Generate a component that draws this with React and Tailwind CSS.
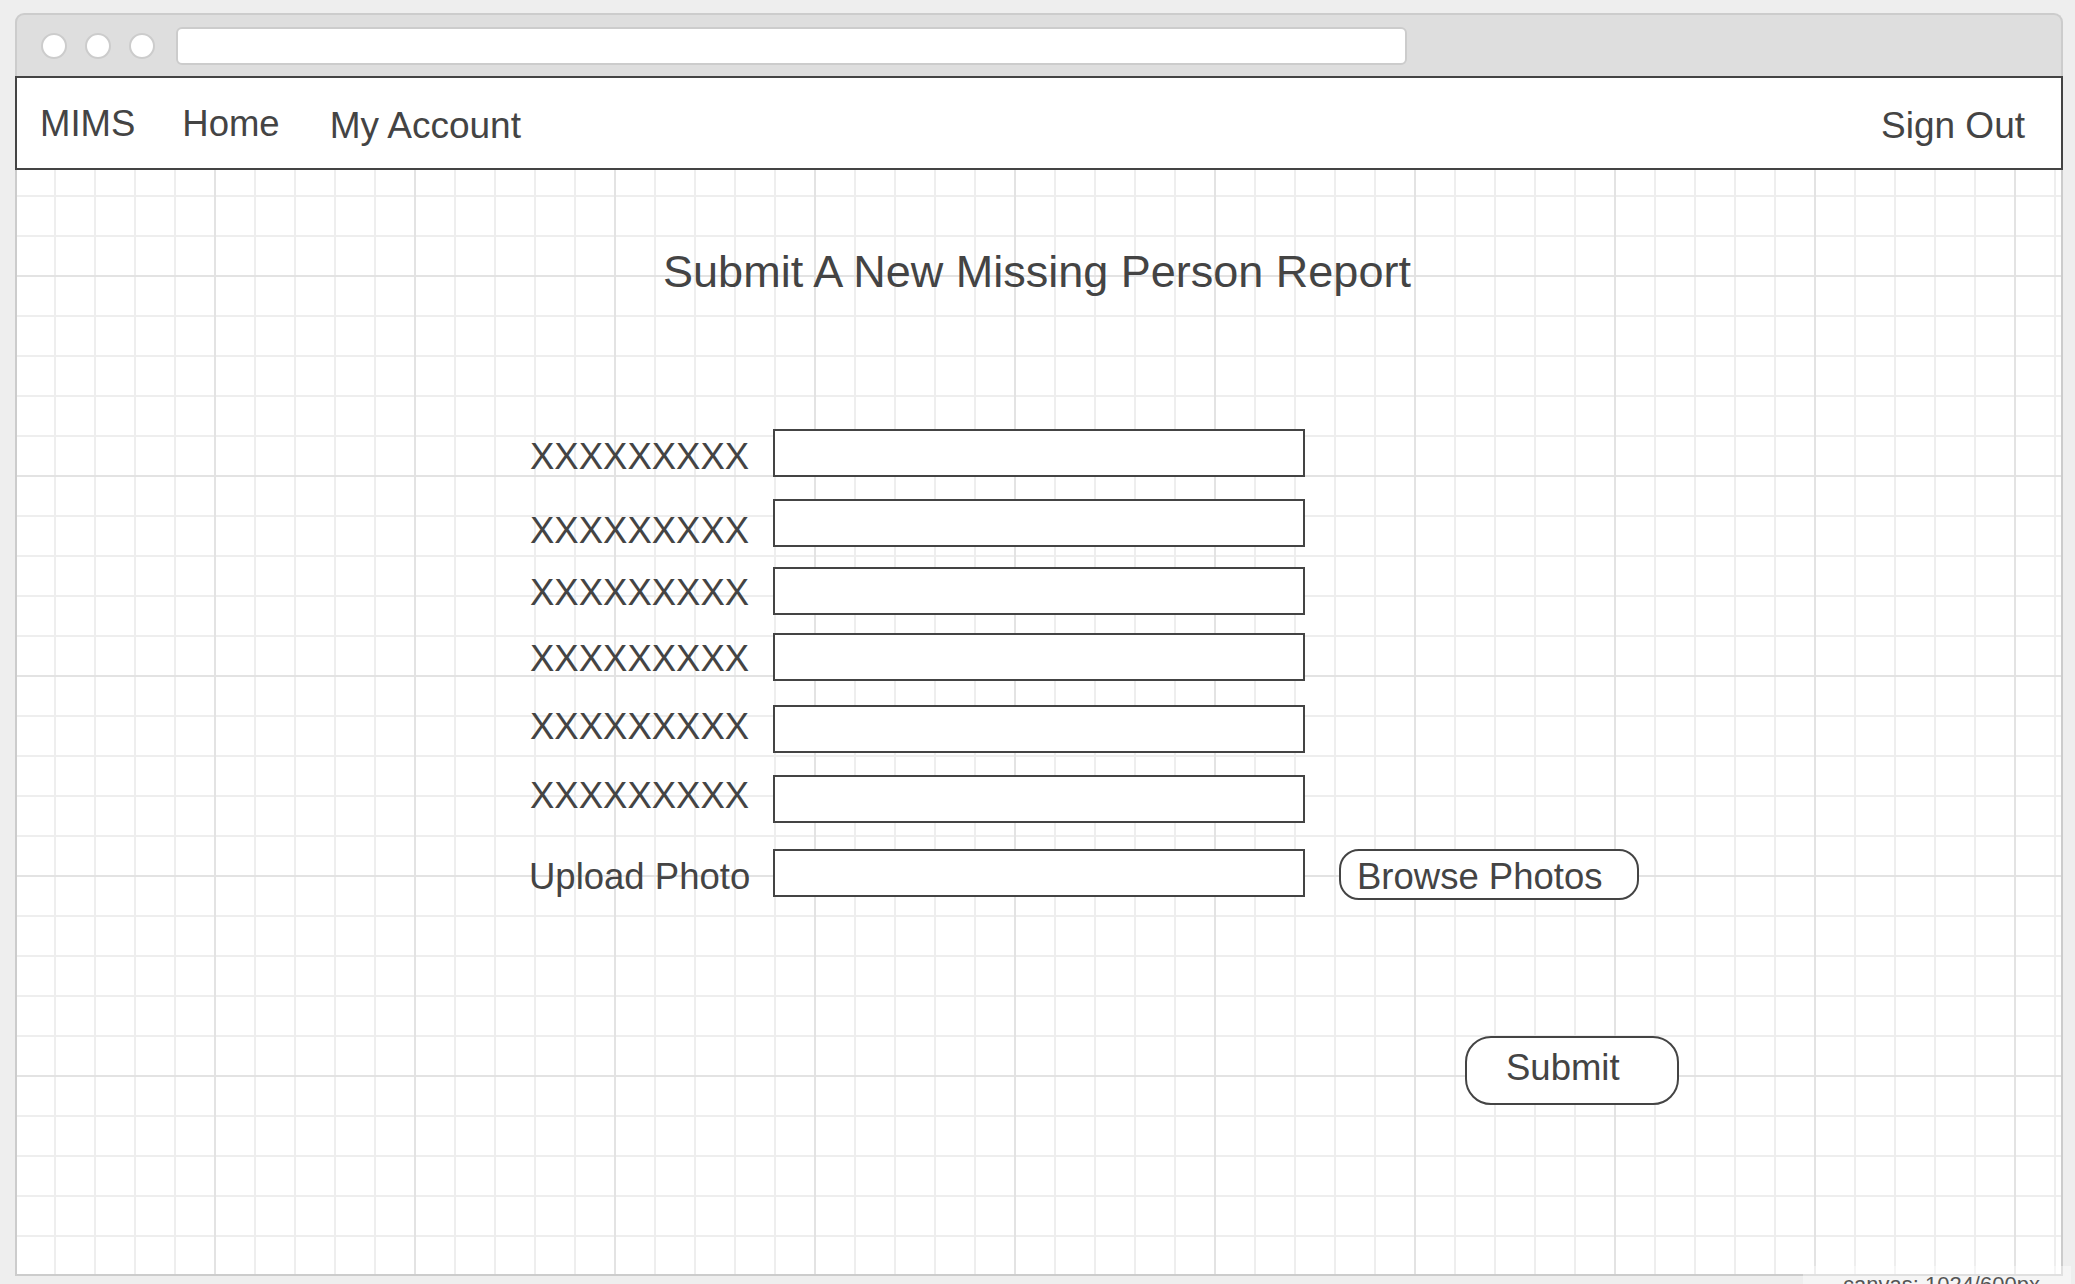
export default function App() {
  const font = "font-['Liberation_Sans',Arial,sans-serif]";
  return (
    <div className={`relative w-[2075px] h-[1284px] overflow-hidden bg-[#eeeeee] pt-[13px] pl-[15px] ${font} text-[#444444]`}>
      <div className="w-[2048px]">
        {/* Browser title bar */}
        <div className="h-[63px] bg-[#dedede] border-2 border-b-0 border-[#cccccc] rounded-t-[9px] flex items-center pl-[24px] gap-[18px]">
          <div className="w-[26px] h-[26px] rounded-full bg-white border-2 border-[#cccccc]" />
          <div className="w-[26px] h-[26px] rounded-full bg-white border-2 border-[#cccccc]" />
          <div className="w-[26px] h-[26px] rounded-full bg-white border-2 border-[#cccccc]" />
          <div className="ml-[3px] w-[1231px] h-[38px] bg-white border-2 border-[#cccccc] rounded-[6px]" />
        </div>

        {/* Nav */}
        <nav className="h-[94px] bg-white border-2 border-[#444444] flex items-start pl-[23px] pr-[36px] text-[37px] leading-none">
          <span className="mt-[28px] text-[36.5px]">MIMS</span>
          <span className="mt-[28px] ml-[47px] text-[36.5px]">Home</span>
          <span className="mt-[29px] ml-[50px]">My Account</span>
          <span className="mt-[29px] ml-auto">Sign Out</span>
        </nav>

        {/* Canvas with grid */}
        <main className="h-[1106px] border-2 border-t-0 border-[#cccccc] bg-white [background-image:linear-gradient(to_right,#e3e3e3_2px,transparent_2px),linear-gradient(to_bottom,#e3e3e3_2px,transparent_2px),linear-gradient(to_right,#eeeeee_2px,transparent_2px),linear-gradient(to_bottom,#eeeeee_2px,transparent_2px)] [background-size:200px_200px,200px_200px,40px_40px,40px_40px] [background-position:-3px_-95px] flex flex-col">
          <h1 className="mt-[79px] h-[45px] text-center text-[45px] leading-none font-normal -translate-x-[2px]">
            Submit A New Missing Person Report
          </h1>

          <div className="ml-[513px] mt-[135px] flex flex-col text-[36.5px] leading-none">
            <div className="flex items-start h-[48px]">
              <span className="w-[243px] shrink-0 mt-[10px]">XXXXXXXXX</span>
              <div className="w-[532px] h-[48px] border-2 border-[#444444] bg-white" />
            </div>
            <div className="flex items-start h-[48px] mt-[22px]">
              <span className="w-[243px] shrink-0 mt-[14px]">XXXXXXXXX</span>
              <div className="w-[532px] h-[48px] border-2 border-[#444444] bg-white" />
            </div>
            <div className="flex items-start h-[48px] mt-[20px]">
              <span className="w-[243px] shrink-0 mt-[8px]">XXXXXXXXX</span>
              <div className="w-[532px] h-[48px] border-2 border-[#444444] bg-white" />
            </div>
            <div className="flex items-start h-[48px] mt-[18px]">
              <span className="w-[243px] shrink-0 mt-[8px]">XXXXXXXXX</span>
              <div className="w-[532px] h-[48px] border-2 border-[#444444] bg-white" />
            </div>
            <div className="flex items-start h-[48px] mt-[24px]">
              <span className="w-[243px] shrink-0 mt-[4px]">XXXXXXXXX</span>
              <div className="w-[532px] h-[48px] border-2 border-[#444444] bg-white" />
            </div>
            <div className="flex items-start h-[48px] mt-[22px]">
              <span className="w-[243px] shrink-0 mt-[3px]">XXXXXXXXX</span>
              <div className="w-[532px] h-[48px] border-2 border-[#444444] bg-white" />
            </div>
            <div className="flex items-start h-[50px] mt-[26px]">
              <span className="-ml-[1px] w-[244px] shrink-0 mt-[10px]">Upload Photo</span>
              <div className="w-[532px] h-[48px] border-2 border-[#444444] bg-white" />
              <button className="ml-[34px] w-[300px] h-[51px] border-2 border-[#444444] rounded-[20px] bg-white text-left pl-[16px] pt-[8px] flex items-start text-[36.5px] leading-none text-[#444444]">
                Browse Photos
              </button>
            </div>

            <div className="flex mt-[137px]">
              <button className="ml-[935px] w-[214px] h-[69px] border-2 border-[#444444] rounded-[26px] bg-white text-left pl-[39px] pt-[12px] flex items-start text-[36.5px] leading-none text-[#444444]">
                Submit
              </button>
            </div>
          </div>
        </main>
      </div>

      {/* canvas size label overlay */}
      <div className="absolute left-[1803px] top-[1266px] w-[268px] h-[30px] bg-white/40 pl-[40px] pt-[8px] text-[22px] leading-none text-[#555555] whitespace-nowrap">
        canvas: 1024/600px
      </div>
    </div>
  );
}
